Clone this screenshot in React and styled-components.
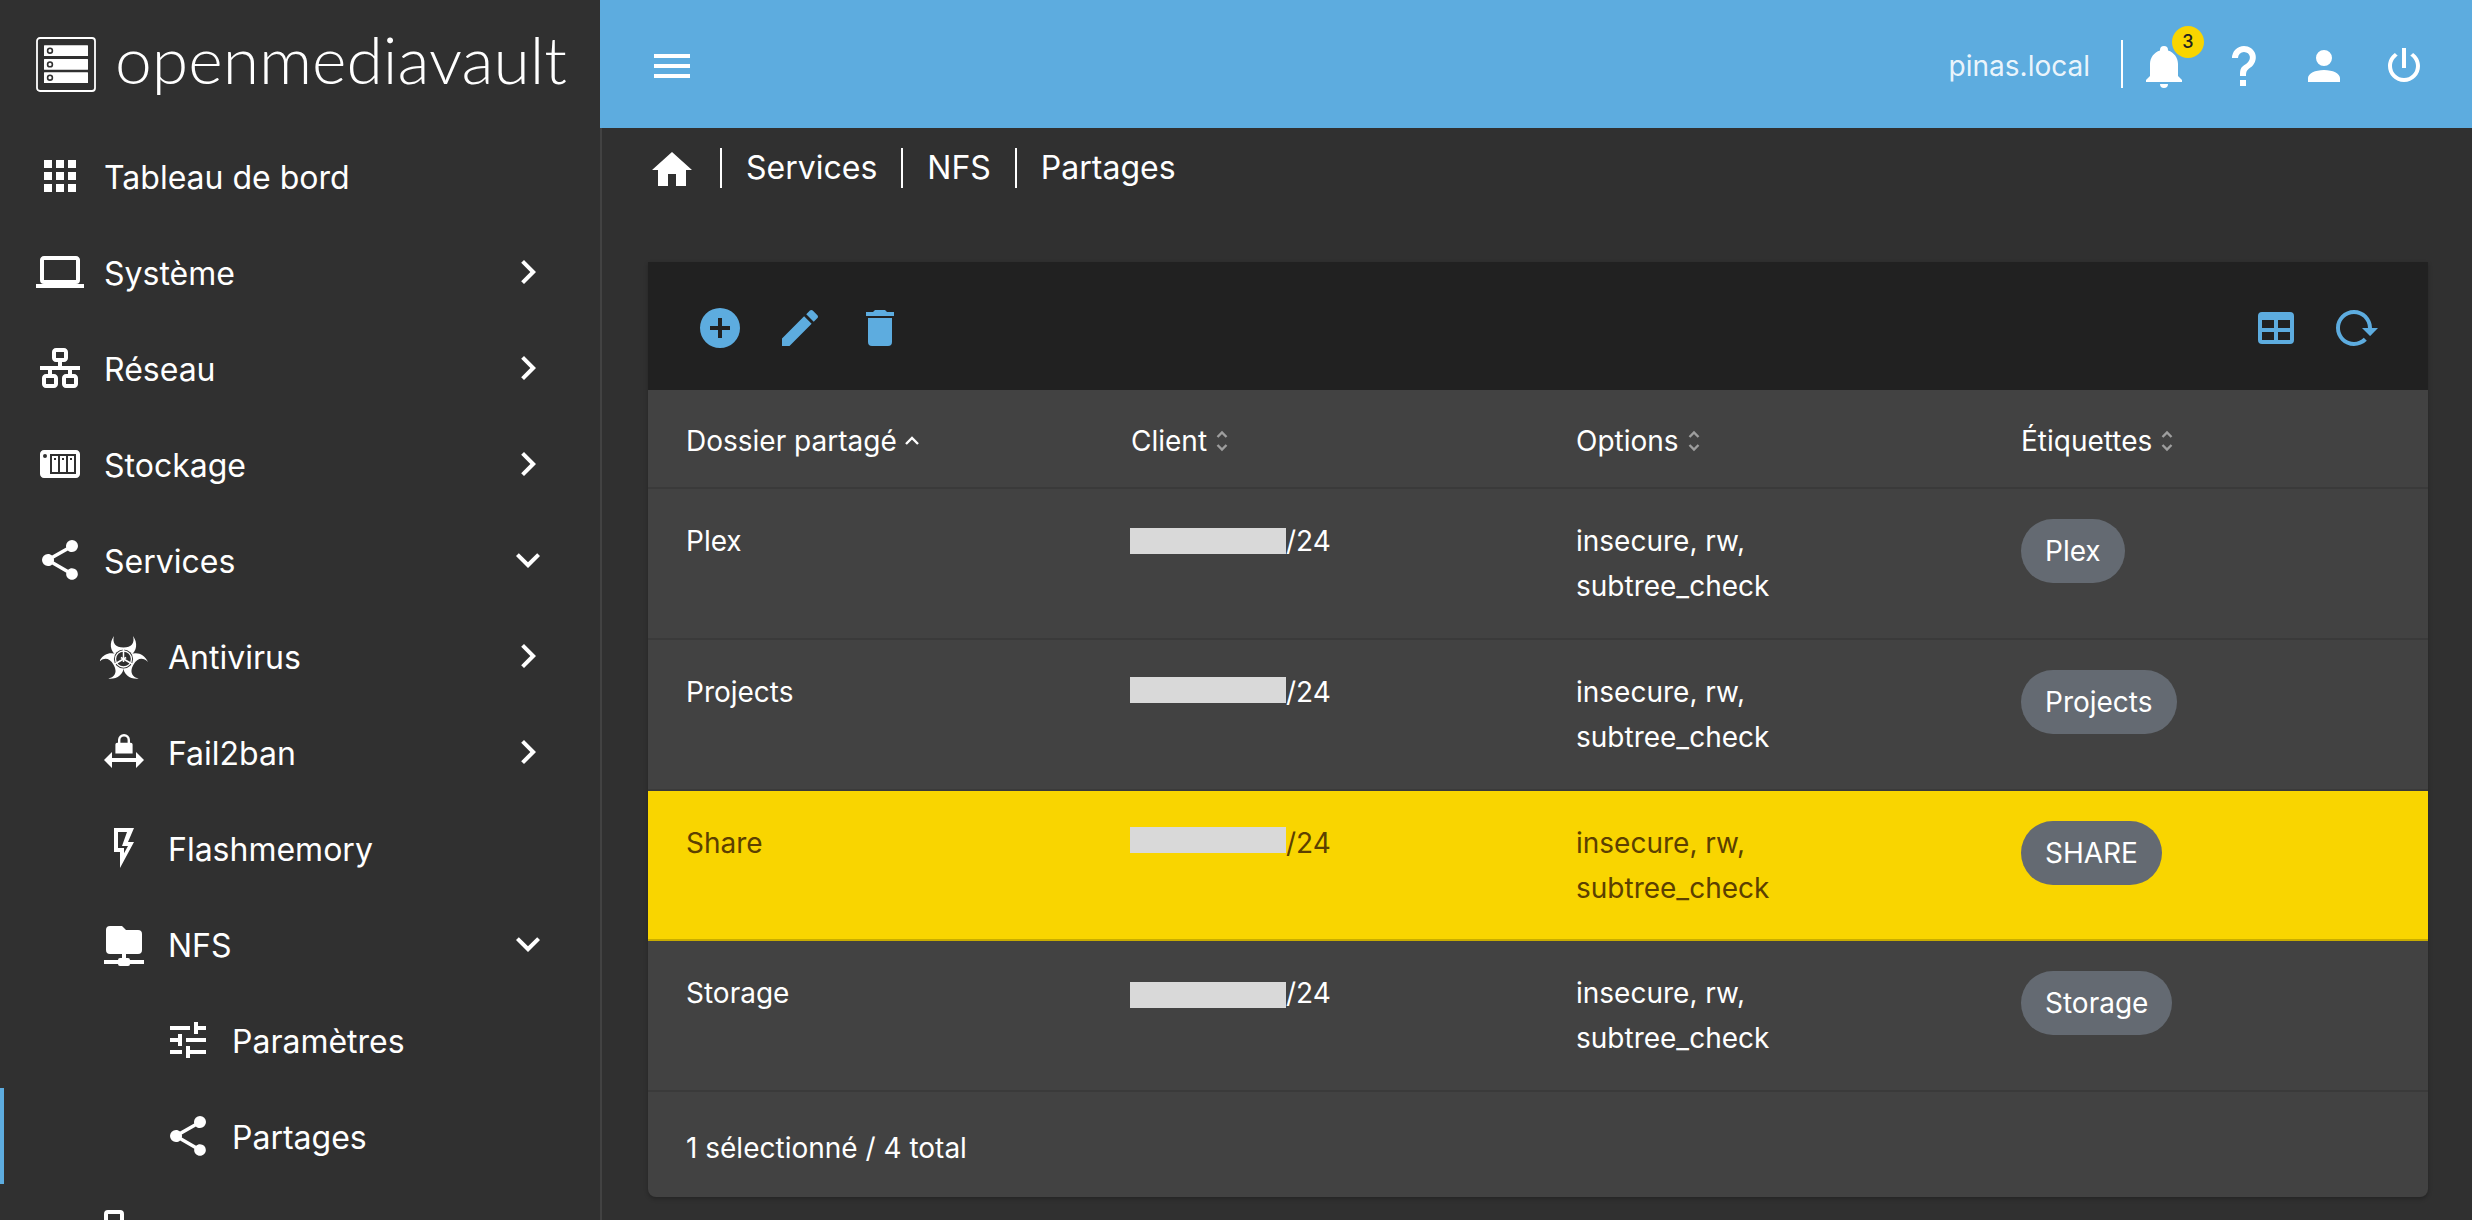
import React from "react";
import styled, { createGlobalStyle } from "styled-components";

const PRIMARY = "#5dacdf";

const paths = {
  apps: "M16,20H20V16H16M16,14H20V10H16M10,8H14V4H10M16,8H20V4H16M10,14H14V10H10M4,14H8V10H4M4,20H8V16H4M10,20H14V16H10M4,8H8V4H4V8Z",
  laptop: "M4,6H20V16H4M20,18A2,2 0 0,0 22,16V6C22,4.89 21.1,4 20,4H4C2.89,4 2,4.89 2,6V16A2,2 0 0,0 4,18H0V20H24V18H20Z",
  lan: "M10,2C8.89,2 8,2.89 8,4V7C8,8.11 8.89,9 10,9H11V11H2V13H6V15H5C3.89,15 3,15.89 3,17V20C3,21.11 3.89,22 5,22H9C10.11,22 11,21.11 11,20V17C11,15.89 10.11,15 9,15H8V13H16V15H15C13.89,15 13,15.89 13,17V20C13,21.11 13.89,22 15,22H19C20.11,22 21,21.11 21,20V17C21,15.89 20.11,15 19,15H18V13H22V11H13V9H14C15.11,9 16,8.11 16,7V4C16,2.89 15.11,2 14,2H10M10,4H14V7H10V4M5,17H9V20H5V17M15,17H19V20H15V17Z",
  nas: "M4,5C2.89,5 2,5.89 2,7V17C2,18.11 2.89,19 4,19H20C21.11,19 22,18.11 22,17V7C22,5.89 21.11,5 20,5H4M4.5,7A1,1 0 0,1 5.5,8A1,1 0 0,1 4.5,9A1,1 0 0,1 3.5,8A1,1 0 0,1 4.5,7M7,7H20V17H7V7M8,8V16H11V8H8M12,8V16H15V8H12M16,8V16H19V8H16M9,9H10V10H9V9M13,9H14V10H13V9M17,9H18V10H17V9Z",
  share: "M18,16.08C17.24,16.08 16.56,16.38 16.04,16.85L8.91,12.7C8.96,12.47 9,12.24 9,12C9,11.76 8.96,11.53 8.91,11.3L15.96,7.19C16.5,7.69 17.21,8 18,8A3,3 0 0,0 21,5A3,3 0 0,0 18,2A3,3 0 0,0 15,5C15,5.24 15.04,5.47 15.09,5.7L8.04,9.81C7.5,9.31 6.79,9 6,9A3,3 0 0,0 3,12A3,3 0 0,0 6,15C6.79,15 7.5,14.69 8.04,14.19L15.16,18.34C15.11,18.55 15.08,18.77 15.08,19C15.08,20.61 16.39,21.91 18,21.91C19.61,21.91 20.92,20.61 20.92,19A2.92,2.92 0 0,0 18,16.08Z",
  lockArrows: "M12,3A3,3 0 0,0 9,6V7.4H8.6A0.9,0.9 0 0,0 7.7,8.3V12.8H16.3V8.3A0.9,0.9 0 0,0 15.4,7.4H15V6A3,3 0 0,0 12,3M12,4.2A1.8,1.8 0 0,1 13.8,6V7.4H10.2V6A1.8,1.8 0 0,1 12,4.2M6,12L2,16L6,20V17H18V20L22,16L18,12V15H6V12Z",
  flash: "M7,2H17L14,9H17L10,22V14H7V2M9,4V12H12V14.66L14,11H11L13.5,4H9Z",
  folderNetwork: "M3,15V5A2,2 0 0,1 5,3H11L13,5H19A2,2 0 0,1 21,7V15A2,2 0 0,1 19,17H13V19H14A1,1 0 0,1 15,20H22V22H15A1,1 0 0,1 14,23H10A1,1 0 0,1 9,22H2V20H9A1,1 0 0,1 10,19H11V17H5A2,2 0 0,1 3,15Z",
  tune: "M3,17V19H9V17H3M3,5V7H13V5H3M13,21V19H21V17H13V15H11V21H13M7,9V11H3V13H7V15H9V9H7M21,13V11H11V13H21M15,9H17V7H21V5H17V3H15V9Z",
  clipped: "M4,1H10A2,2 0 0,1 12,3V20A2,2 0 0,1 10,22H4A2,2 0 0,1 2,20V3A2,2 0 0,1 4,1M4,3V20H10V3H4Z",
  chevronRight: "M8.59,16.58L13.17,12L8.59,7.41L10,6L16,12L10,18L8.59,16.58Z",
  chevronDown: "M7.41,8.58L12,13.17L16.59,8.58L18,10L12,16L6,10L7.41,8.58Z",
  menu: "M3,6H21V8H3V6M3,11H21V13H3V11M3,16H21V18H3V16Z",
  bell: "M21,19V20H3V19L5,17V11C5,7.9 7.03,5.17 10,4.29C10,4.19 10,4.1 10,4A2,2 0 0,1 12,2A2,2 0 0,1 14,4C14,4.1 14,4.19 14,4.29C16.97,5.17 19,7.9 19,11V17L21,19M14,21A2,2 0 0,1 12,23A2,2 0 0,1 10,21",
  help: "M10,19H13V22H10V19M12,2C17.35,2.22 19.68,7.62 16.5,11.67C15.67,12.67 14.33,13.33 13.67,14.17C13,15 13,16 13,17H10C10,15.33 10,13.92 10.67,12.92C11.33,11.92 12.67,11.33 13.5,10.67C15.92,8.43 15.32,5.26 12,5A3,3 0 0,0 9,8H6A6,6 0 0,1 12,2Z",
  account: "M12,4A4,4 0 0,1 16,8A4,4 0 0,1 12,12A4,4 0 0,1 8,8A4,4 0 0,1 12,4M12,14C16.42,14 20,15.79 20,18V20H4V18C4,15.79 7.58,14 12,14Z",
  power: "M16.56,5.44L15.11,6.89C16.84,7.94 18,9.83 18,12A6,6 0 0,1 12,18A6,6 0 0,1 6,12C6,9.83 7.16,7.94 8.88,6.88L7.44,5.44C5.36,6.88 4,9.28 4,12A8,8 0 0,0 12,20A8,8 0 0,0 20,12C20,9.28 18.64,6.88 16.56,5.44M13,3H11V13H13",
  home: "M10,20V14H14V20H19V12H22L12,3L2,12H5V20H10Z",
  plusCircle: "M17,13H13V17H11V13H7V11H11V7H13V11H17M12,2A10,10 0 0,0 2,12A10,10 0 0,0 12,22A10,10 0 0,0 22,12A10,10 0 0,0 12,2Z",
  pencil: "M20.71,7.04C21.1,6.65 21.1,6 20.71,5.63L18.37,3.29C18,2.9 17.35,2.9 16.96,3.29L15.12,5.12L18.87,8.87M3,17.25V21H6.75L17.81,9.93L14.06,6.18L3,17.25Z",
  trash: "M19,4H15.5L14.5,3H9.5L8.5,4H5V6H19M6,19A2,2 0 0,0 8,21H16A2,2 0 0,0 18,19V7H6V19Z",
  table: "M5,4H19A2,2 0 0,1 21,6V18A2,2 0 0,1 19,20H5A2,2 0 0,1 3,18V6A2,2 0 0,1 5,4M5,8V12H11V8H5M13,8V12H19V8H13M5,14V18H11V14H5M13,14V18H19V14H13Z",
  reload: "M2,12C2,16.97 6.03,21 11,21C13.39,21 15.68,20.06 17.4,18.4L15.9,16.9C14.63,18.25 12.86,19 11,19C4.76,19 1.64,11.46 6.05,7.05C10.46,2.64 18,5.77 18,12H15L19,16H19.1L23,12H20C20,7.03 15.97,3 11,3C6.03,3 2,7.03 2,12Z",
};

const GlobalStyle = createGlobalStyle`
  html, body {
    margin: 0;
    height: 100%;
    overflow: hidden;
    background: #303030;
  }
  body {
    font-family: Inter, "Liberation Sans", sans-serif;
    color: #fff;
  }
`;

const Shell = styled.div`
  display: flex;
  width: 2472px;
  height: 1220px;
  overflow: hidden;
`;

const Sidebar = styled.aside`
  width: 600px;
  flex: none;
  overflow: hidden;
`;

const Brand = styled.div`
  display: flex;
  align-items: center;
  height: 128px;
  padding-left: 36px;
  gap: 19px;
`;

const BrandName = styled.span`
  margin-top: -10px;
  font-family: Lato, sans-serif;
  font-weight: 300;
  font-size: 66px;
  line-height: 1;
`;

const NavList = styled.nav`
  display: flex;
  flex-direction: column;
`;

const NavRow = styled.div`
  position: relative;
  display: flex;
  align-items: center;
  height: 96px;
  flex: none;
  padding-left: ${(p) => 36 + p.$level * 64}px;
  padding-right: 48px;
  ${(p) =>
    p.$active &&
    `&::before {
      content: "";
      position: absolute;
      left: 0;
      top: 0;
      bottom: 0;
      width: 4px;
      background: ${PRIMARY};
    }`}
`;

const NavLabel = styled.span`
  flex: 1;
  margin-left: 20px;
  padding-top: 3px;
  font-size: 32px;
  line-height: 1;
`;

const Svg = styled.svg`
  width: 48px;
  height: 48px;
  flex: none;
  fill: ${(p) => p.$color || "currentColor"};
  display: block;
`;

const Main = styled.main`
  flex: 1;
  min-width: 0;
  display: flex;
  flex-direction: column;
`;

const TopBar = styled.header`
  display: flex;
  align-items: center;
  box-sizing: border-box;
  height: 128px;
  flex: none;
  background: ${PRIMARY};
  padding: 4px 28px 0 48px;
`;

const HostName = styled.span`
  margin-left: auto;
  font-size: 28px;
  color: rgba(255, 255, 255, 0.9);
`;

const TopDivider = styled.span`
  width: 2px;
  height: 48px;
  margin: -4px 0 0 31px;
  background: #fff;
`;

const TopButton = styled.div`
  position: relative;
  width: 80px;
  height: 80px;
  display: flex;
  align-items: center;
  justify-content: center;
`;

const Bell = styled(TopButton)`
  margin-left: 1px;
`;

const Badge = styled.span`
  position: absolute;
  top: 0;
  right: 0;
  width: 32px;
  height: 32px;
  border-radius: 50%;
  background: #f9d500;
  color: #212121;
  font-size: 18px;
  font-weight: 500;
  line-height: 32px;
  text-align: center;
`;

const Content = styled.div`
  flex: 1;
  border-left: 2px solid #424242;
`;

const Crumbs = styled.div`
  display: flex;
  align-items: center;
  height: 84px;
  padding-left: 46px;
  margin-bottom: 50px;
`;

const Crumb = styled.span`
  margin-bottom: 5px;
  font-size: 32px;
  line-height: 40px;
  padding: 0 24px;
  border-left: 2px solid #fff;
  &:first-of-type {
    margin-left: 24px;
  }
`;

const Card = styled.section`
  margin: 0 44px 0 46px;
  background: #424242;
  border-radius: 0 0 8px 8px;
  box-shadow: 0 2px 4px rgba(0, 0, 0, 0.25);
`;

const Toolbar = styled.div`
  display: flex;
  align-items: center;
  height: 128px;
  box-sizing: border-box;
  padding: 4px 32px 0;
  background: #212121;
`;

const ToolButton = styled.div`
  width: 80px;
  height: 80px;
  display: flex;
  align-items: center;
  justify-content: center;
`;

const Spacer = styled.div`
  flex: 1;
`;

const Grid = styled.div`
  display: grid;
  grid-template-columns: repeat(4, 445px);
  box-sizing: border-box;
  height: ${(p) => p.$height};
  border-bottom: 2px solid ${(p) => (p.$selected ? "#c9ad00" : "#3a3a3a")};
  background: ${(p) => (p.$selected ? "#f9d500" : "#424242")};
  color: ${(p) => (p.$selected ? "#5c4000" : "#fff")};
`;

const HeadCell = styled.div`
  display: flex;
  align-items: center;
  gap: 8px;
  padding: 5px 0 0 38px;
  font-size: 28px;
  font-weight: 400;
`;

const SortIcon = styled.svg`
  width: 14px;
  height: 24px;
  fill: none;
  stroke-width: 2.4;
`;

const Cell = styled.div`
  padding: 30px 0 0 38px;
  font-size: 28px;
  line-height: 45px;
`;

// the grey box hides the real address; it sits a little off the text line in each row
const Masked = styled.span`
  display: inline-block;
  width: 156px;
  height: 26px;
  margin-left: -1px;
  vertical-align: -3px;
  background: #d9d9d9;
  transform: translateY(${(p) => p.$shift}px);
`;

const Chip = styled.span`
  display: inline-flex;
  align-items: center;
  height: 64px;
  padding: 0 24px;
  border-radius: 32px;
  background: #646a72;
  color: #fff;
  font-size: 28px;
  line-height: 1;
`;

const Footer = styled.div`
  display: flex;
  align-items: center;
  height: 105px;
  padding: 6px 0 0 38px;
  box-sizing: border-box;
  font-size: 28px;
`;

const Icon = ({ d, color, evenOdd }) => (
  <Svg viewBox="0 0 24 24" $color={color}>
    <path d={d} fillRule={evenOdd ? "evenodd" : "nonzero"} />
  </Svg>
);

const LogoIcon = () => (
  <svg width="60" height="55" viewBox="0 0 60 55">
    <rect x="1" y="1" width="58" height="53" rx="3" fill="none" stroke="#fff" strokeWidth="1.8" />
    {[8.3, 22, 35.3].map((y) => (
      <g key={y}>
        <rect x="8" y={y} width="44" height="10.8" rx="0.5" fill="#fff" />
        <circle cx="14" cy={y + 5.4} r="2.4" fill="#fff" stroke="#303030" strokeWidth="1.6" />
      </g>
    ))}
  </svg>
);

const BiohazardIcon = () => (
  <Svg viewBox="0 0 48 48">
    <defs>
      <mask id="core-cut">
        <rect width="48" height="48" fill="#fff" />
        <circle cx="23.5" cy="27" r="9.6" fill="#000" />
      </mask>
    </defs>
    <g mask="url(#core-cut)">
      {[0, 120, 240].map((a) => (
        <path
          key={a}
          transform={`rotate(${a} 23.5 27)`}
          d="M14 4C9 11 10 19 16.5 23.5L30.5 23.5C37 19 38 11 33 4C35 11 31.5 15.5 23.5 15.5C15.5 15.5 12 11 14 4Z"
        />
      ))}
    </g>
    <circle cx="23.5" cy="27" r="8" fill="none" stroke="currentColor" strokeWidth="1.3" />
    {[0, 120, 240].map((a) => (
      <path
        key={a}
        d="M23.5 30V17"
        stroke="currentColor"
        strokeWidth="1.5"
        transform={`rotate(${a} 23.5 27)`}
      />
    ))}
  </Svg>
);

const navItems = [
  { label: "Tableau de bord", icon: paths.apps, level: 0 },
  { label: "Système", icon: paths.laptop, level: 0, arrow: "right" },
  { label: "Réseau", icon: paths.lan, level: 0, arrow: "right" },
  { label: "Stockage", icon: paths.nas, level: 0, arrow: "right", evenOdd: true },
  { label: "Services", icon: paths.share, level: 0, arrow: "down" },
  { label: "Antivirus", bio: true, level: 1, arrow: "right" },
  { label: "Fail2ban", icon: paths.lockArrows, level: 1, arrow: "right", evenOdd: true },
  { label: "Flashmemory", icon: paths.flash, level: 1 },
  { label: "NFS", icon: paths.folderNetwork, level: 1, arrow: "down" },
  { label: "Paramètres", icon: paths.tune, level: 2 },
  { label: "Partages", icon: paths.share, level: 2, active: true },
  { label: "", icon: paths.clipped, level: 1 },
];

const rows = [
  { name: "Plex", tag: "Plex", shift: 0 },
  { name: "Projects", tag: "Projects", shift: -2 },
  { name: "Share", tag: "SHARE", selected: true, shift: -3 },
  { name: "Storage", tag: "Storage", shift: 2 },
];

const SortMark = ({ active }) =>
  active ? (
    <SortIcon viewBox="0 0 14 24" stroke="#fff">
      <path d="M1 15 7 9l6 6" />
    </SortIcon>
  ) : (
    <SortIcon viewBox="0 0 14 24" stroke="#9e9e9e">
      <path d="M2.5 8 7 3.5 11.5 8M2.5 16 7 20.5 11.5 16" />
    </SortIcon>
  );

export default function App() {
  return (
    <Shell>
      <GlobalStyle />
      <Sidebar>
        <Brand>
          <LogoIcon />
          <BrandName>openmediavault</BrandName>
        </Brand>
        <NavList>
          {navItems.map((item, i) => (
            <NavRow key={i} $level={item.level} $active={item.active}>
              {item.bio ? <BiohazardIcon /> : <Icon d={item.icon} evenOdd={item.evenOdd} />}
              <NavLabel>{item.label}</NavLabel>
              {item.arrow && (
                <Icon d={item.arrow === "right" ? paths.chevronRight : paths.chevronDown} />
              )}
            </NavRow>
          ))}
        </NavList>
      </Sidebar>
      <Main>
        <TopBar>
          <Icon d={paths.menu} />
          <HostName>pinas.local</HostName>
          <TopDivider />
          <Bell>
            <Icon d={paths.bell} />
            <Badge>3</Badge>
          </Bell>
          <TopButton>
            <Icon d={paths.help} />
          </TopButton>
          <TopButton>
            <Icon d={paths.account} />
          </TopButton>
          <TopButton>
            <Icon d={paths.power} />
          </TopButton>
        </TopBar>
        <Content>
          <Crumbs>
            <Icon d={paths.home} />
            <Crumb>Services</Crumb>
            <Crumb>NFS</Crumb>
            <Crumb>Partages</Crumb>
          </Crumbs>
          <Card>
            <Toolbar>
              <ToolButton>
                <Icon d={paths.plusCircle} color={PRIMARY} />
              </ToolButton>
              <ToolButton>
                <Icon d={paths.pencil} color={PRIMARY} />
              </ToolButton>
              <ToolButton>
                <Icon d={paths.trash} color={PRIMARY} />
              </ToolButton>
              <Spacer />
              <ToolButton>
                <Icon d={paths.table} color={PRIMARY} />
              </ToolButton>
              <ToolButton>
                <Icon d={paths.reload} color={PRIMARY} />
              </ToolButton>
            </Toolbar>
            <Grid $height="99px">
              <HeadCell>
                Dossier partagé
                <SortMark active />
              </HeadCell>
              <HeadCell>
                Client
                <SortMark />
              </HeadCell>
              <HeadCell>
                Options
                <SortMark />
              </HeadCell>
              <HeadCell>
                Étiquettes
                <SortMark />
              </HeadCell>
            </Grid>
            {rows.map((row) => (
              <Grid key={row.name} $height="150.75px" $selected={row.selected}>
                <Cell>{row.name}</Cell>
                <Cell>
                  <Masked $shift={row.shift} />
                  /24
                </Cell>
                <Cell>
                  insecure, rw,
                  <br />
                  subtree_check
                </Cell>
                <Cell>
                  <Chip>{row.tag}</Chip>
                </Cell>
              </Grid>
            ))}
            <Footer>1 sélectionné / 4 total</Footer>
          </Card>
        </Content>
      </Main>
    </Shell>
  );
}
